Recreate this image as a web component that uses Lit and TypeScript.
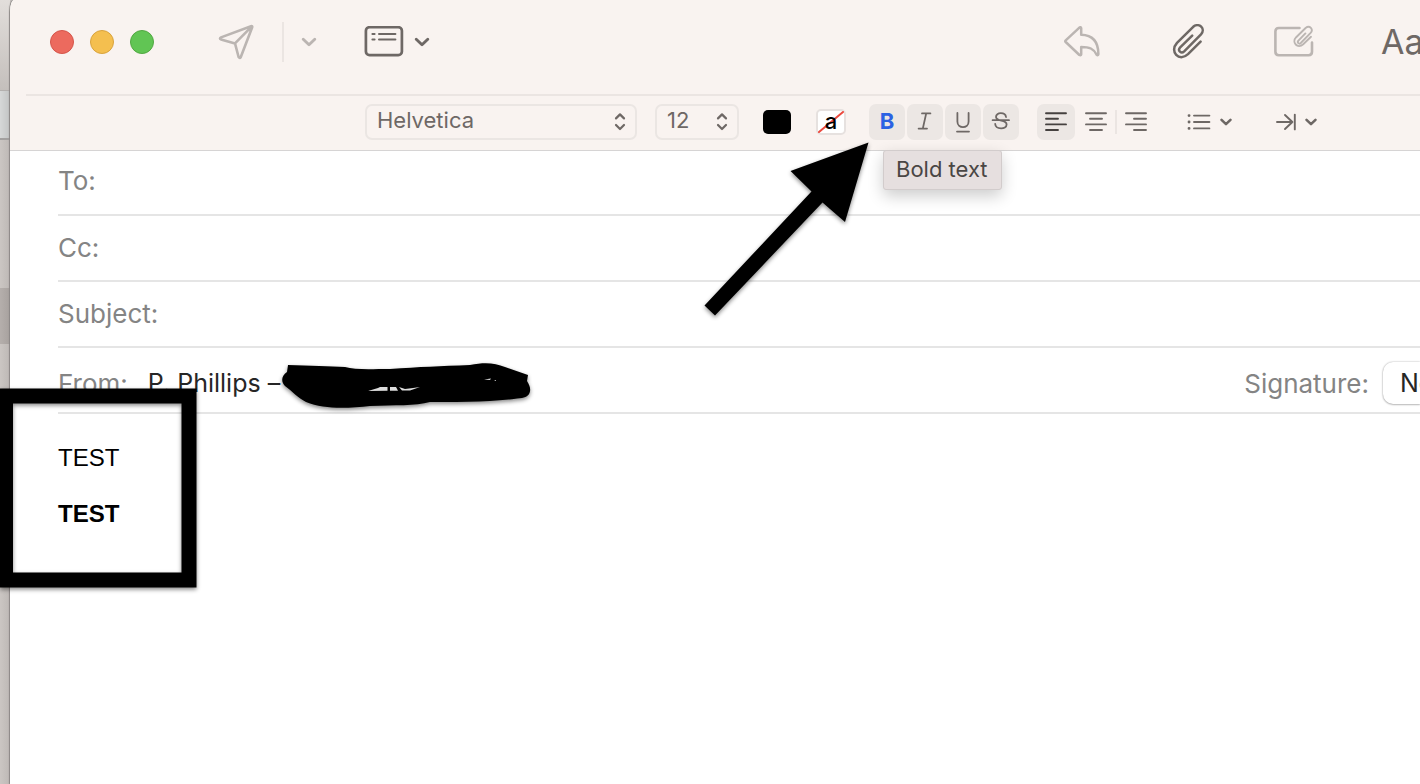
import { LitElement, html, css, svg } from "lit";
import { customElement, state } from "lit/decorators.js";

const chevron = (cls: string) => html`<svg class=${cls} viewBox="0 0 14 9" aria-hidden="true"><path d="M1.8 2 L7 7 L12.2 2" /></svg>`;
const updown = html`<svg class="updown" viewBox="0 0 12 20" aria-hidden="true"><path d="M2 6.4 L6 2.4 L10 6.4 M2 13 L6 17 L10 13" /></svg>`;

// Four text lines, each given as [start, end]
const lines = (rows: number[][]) => html`<svg class="lines" viewBox="0 0 22 20" aria-hidden="true">
  ${rows.map(([a, b], i) => svg`<path d="M${a} ${[1.2, 6.8, 12.4, 18][i]} H${b}" />`)}
</svg>`;

@customElement("app-root")
export class AppRoot extends LitElement {
  @state() private bold = true;

  static styles = css`
    :host {
      display: block;
      position: relative;
      overflow: hidden;
      height: 100vh;
      font-family: Inter, "Noto Sans", sans-serif;
      color: #262626;
    }
    * { box-sizing: border-box; }
    svg { display: block; fill: none; stroke: currentColor; stroke-linecap: round; stroke-linejoin: round; }
    button { border: 0; margin: 0; padding: 0; background: none; color: inherit; font: inherit; }
    input, select { border: 0; margin: 0; padding: 0; background: none; color: inherit; font: inherit; outline: none; appearance: none; }
    .screen { display: flex; height: 100%; background: #c6c1be; }
    .behind { flex: none; width: 10px; display: flex; flex-direction: column; background: linear-gradient(90deg, #cbc6c3, #bdb8b5); }
    .b1 { height: 90px; background: linear-gradient(#e2dedb, #c4bfbc); }
    .b2 { height: 50px; background: linear-gradient(90deg, #d6d8d8, #c2c4c4); border-top: 1px solid #b3b0ae; border-bottom: 2px solid #a2a09f; }
    .b3 { height: 148px; }
    .b4 { height: 56px; background: linear-gradient(90deg, #b5afac, #a7a19e); }
    .window { flex: 1; min-width: 0; display: flex; flex-direction: column; overflow: hidden; background: #fff; border-top-left-radius: 4px 12px; box-shadow: -1px 0 1px #8b8785; white-space: nowrap; }
    header { background: #f9f3f0; border-bottom: 1px solid #d6d4d4; color: #6e6865; }
    .toolbar { display: flex; align-items: center; height: 94px; padding: 0 0 10px 40px; }
    .light { width: 24px; height: 24px; border-radius: 50%; margin-right: 16px; border: 1px solid; }
    .red { background: #ec6a5e; border-color: #d5554a; }
    .yellow { background: #f4bf4f; border-color: #d9a33d; }
    .green { background: #61c554; border-color: #52a842; }
    .dim { color: #bbb5b2; }
    .send { margin-left: 48px; }
    .send svg { width: 36px; height: 36px; stroke-width: 2.6; }
    .vr { width: 2px; height: 40px; background: #ebe5e2; margin: 0 17px 0 28px; }
    .chev { width: 16px; height: 10px; stroke-width: 2.6; }
    .chev.small { width: 12px; height: 8px; stroke-width: 3; }
    .tmpl { display: flex; align-items: center; gap: 10px; margin-left: 47px; }
    .tmpl .card { width: 40px; height: 32px; }
    .grow { flex: 1; }
    .tools { display: flex; align-items: center; }
    .reply svg { width: 36px; height: 32px; stroke-width: 2.5; }
    .clip { margin-left: 72px; }
    .clip svg { width: 34px; height: 36px; stroke-width: 2.5; }
    .photo { margin-left: 68px; }
    .photo svg { width: 40px; height: 34px; stroke-width: 2.6; }
    .aa { width: 39px; margin-left: 67px; font-size: 34px; line-height: 40px; text-align: left; }
    .rule { height: 2px; margin-left: 16px; background: #ebe5e2; }
    .format { display: flex; align-items: center; height: 54px; padding: 0 0 2px 355px; }
    .pick { display: grid; align-items: center; height: 36px; border: 2px solid #ebe6e3; border-radius: 7px; font-size: 22px; }
    .pick > * { grid-area: 1 / 1; }
    .pick select { width: 100%; height: 32px; padding: 0 0 4px 10px; }
    .family { width: 272px; }
    .size { width: 84px; margin-left: 18px; }
    .updown { width: 12px; height: 20px; justify-self: end; margin-right: 9px; stroke-width: 2.2; pointer-events: none; }
    .ink { width: 28px; height: 24px; margin-left: 24px; border-radius: 5px; background: #000; }
    .paper { display: grid; width: 30px; height: 26px; margin-left: 25px; border: 2px solid #e6e1df; border-radius: 5px; background: #fff; color: #000; font-size: 22px; font-weight: 500; line-height: 20px; }
    .paper > * { grid-area: 1 / 1; }
    .paper svg { width: 26px; height: 22px; stroke: #ec4a3f; stroke-width: 2; }
    .styles { display: flex; gap: 2px; margin: 0 18px 0 23px; }
    .key { display: grid; place-items: center; width: 36px; height: 36px; border-radius: 7px; background: #ece7e4; font-size: 22px; line-height: 32px; }
    .key svg { width: 24px; height: 24px; stroke-width: 1.8; }
    .key.on { padding-bottom: 2px; color: #2c62e3; font-weight: 700; }
    .align { display: flex; align-items: center; }
    .al { display: grid; place-items: center; width: 38px; height: 36px; border-radius: 7px; }
    .al.on { margin-right: 2px; background: #ece7e4; color: #45413f; }
    .lines { width: 22px; height: 20px; stroke-width: 1.9; }
    .bar { width: 2px; height: 24px; background: #ebe5e2; }
    .drop { display: flex; align-items: center; gap: 9px; }
    .list { margin-left: 32px; }
    .list svg:first-child { width: 24px; height: 18px; stroke-width: 1.9; }
    .indent { margin-left: 44px; }
    .indent svg:first-child { width: 20px; height: 18px; stroke-width: 1.9; }
    .fields { padding-left: 48px; font-size: 25px; }
    .row { display: flex; align-items: center; height: 66px; border-bottom: 2px solid #e5e5e5; padding-bottom: 2px; }
    .row:first-child { height: 65px; padding-bottom: 4px; }
    .row:last-child { padding: 6px 0 0; }
    .row label { color: #848484; font-size: 26px; }
    .row input { flex: 1; min-width: 0; height: 40px; padding-left: 12px; }
    .from { margin-left: 20px; height: 40px; }
    .sig { width: 37px; height: 42px; margin-left: 14px; padding-left: 17px; border-radius: 10px 0 0 10px; background: #fff; box-shadow: 0 0 2px #0005, 0 1px 2px #0003; }
    .editor { flex: 1; padding: 30px 48px; color: #000; font-family: "Liberation Sans", Arial, sans-serif; font-size: 24px; line-height: 28px; outline: none; }
    .editor p { margin: 0 0 28px; }
    .anchor { position: relative; }
    .tip { position: absolute; left: 14px; top: 46px; z-index: 2; padding: 0 13px 2px 12px; color: #4a4644; background: #e6dfdf; border: 1px solid #d2cccc; border-radius: 3px; box-shadow: 0 6px 16px #0003; font-size: 22px; line-height: 36px; }
    .marks { position: absolute; left: 0; top: 0; width: 1420px; height: 784px; pointer-events: none; filter: drop-shadow(0 2px 2px #0007); stroke: none; fill: #000; }
    .marks .frame { fill: none; stroke: #000; stroke-width: 15; stroke-linejoin: miter; }
    .marks .gap { fill: #ddd; }
  `;

  render() {
    return html`
      <div class="screen">
        <div class="behind"><div class="b1"></div><div class="b2"></div><div class="b3"></div><div class="b4"></div></div>
        <main class="window">
          <header>
            <div class="toolbar">
              <button class="light red" aria-label="Close"></button>
              <button class="light yellow" aria-label="Minimize"></button>
              <button class="light green" aria-label="Zoom"></button>
              <button class="send dim" aria-label="Send">
                <svg viewBox="0 0 36 36"><path d="M33 2.2 Q34.6 1.6 34.2 3.2 L22.8 33 Q21.8 34.8 20.6 33 L17 19.4 L3 15.4 Q1 14.4 3 13.4 Z M33.6 2.6 L17 19.4" /></svg>
              </button>
              <span class="vr"></span>
              <button class="dim" aria-label="Send later">${chevron("chev")}</button>
              <button class="tmpl" aria-label="Header fields">
                <svg class="card" viewBox="0 0 40 32"><rect x="1.9" y="1.2" width="36" height="28" rx="3.6" stroke-width="2.7" /><path d="M8.4 8 h2.2 M15 8 H31.4 M8.4 13.4 h2.2 M15 13.4 H31.4" stroke-width="2" /></svg>
                ${chevron("chev")}
              </button>
              <span class="grow"></span>
              <div class="tools">
                <button class="reply dim" aria-label="Reply">
                  <svg viewBox="0 0 36 32"><path d="M17.2 2.2 V8.8 C28 9 34.2 15 34.4 28 Q34 30 32.6 28.6 C29.5 22.6 25.5 20.9 17.2 20.9 V28.2 Q16.9 29.8 15.4 29 L1.7 16 Q.9 15.2 1.7 14.4 L15.4 1.6 Q16.9 .6 17.2 2.2 Z" /></svg>
                </button>
                <button class="clip" aria-label="Attach">
                  <svg viewBox="0 0 34 36"><path d="M20.2 11.6 L8.2 23.4 C5.2 26.6 9.2 30.2 12.2 27.4 L29 10.4 C34.1 4.8 27 -2 21.2 2.8 L5 18.8 C-3 27.6 7.2 38.6 16 30.2 L28.6 17.6" /></svg>
                </button>
                <button class="photo dim" aria-label="Insert photo">
                  <svg viewBox="0 0 40 34"><path d="M25.5 3 H4.8 Q1.4 3 1.4 6.4 V26.8 Q1.4 30.2 4.8 30.2 H34.6 Q38 30.2 38 26.8 V17.5" /><path stroke-width="1.9" d="M31.4 8.4 L24.4 15.6 C22.8 17.6 25 19.6 26.8 18 L36.4 8.2 C40 4.2 35.6 -.2 31.6 3 L22.2 12.2 C17.2 17.4 23.6 24.2 29.2 19.2 L37 11.8" /></svg>
                </button>
                <button class="aa" aria-label="Format">Aa</button>
              </div>
            </div>
            <div class="rule"></div>
            <div class="format">
              <div class="pick family"><select aria-label="Font"><option>Helvetica</option></select>${updown}</div>
              <div class="pick size"><select aria-label="Font size"><option>12</option></select>${updown}</div>
              <button class="ink" aria-label="Text color"></button>
              <button class="paper" aria-label="Background color"><svg viewBox="0 0 26 22"><path d="M1 21 L25 1" /></svg><span>a</span></button>
              <div class="styles">
                <div class="anchor">
                  <button class="key ${this.bold ? "on" : ""}" aria-describedby="tip" @click=${() => (this.bold = !this.bold)}>B</button>
                  <div class="tip" id="tip" role="tooltip">Bold text</div>
                </div>
                <button class="key" aria-label="Italic"><svg viewBox="0 0 24 24"><path d="M9 3.4 H17.4 M5.6 18.6 H14 M13.2 3.4 L9.8 18.6" /></svg></button>
                <button class="key" aria-label="Underline"><svg viewBox="0 0 24 24"><path d="M6.4 3 V11.6 C6.4 19 17.6 19 17.6 11.6 V3 M6 21.6 H18" /></svg></button>
                <button class="key" aria-label="Strikethrough"><svg viewBox="0 0 24 24"><path d="M17 7 C16.4 1.8 6.8 2 7 7 C7.2 12 17.6 9.4 17.6 14.4 C17.6 19.8 6.6 19.8 6.2 14 M3.6 10.2 H20" /></svg></button>
              </div>
              <div class="align">
                <button class="al on" aria-label="Align left">${lines([[1, 21], [1, 13], [1, 21], [1, 13]])}</button>
                <button class="al" aria-label="Center">${lines([[1, 21], [5, 17], [1, 21], [5, 17]])}</button>
                <span class="bar"></span>
                <button class="al" aria-label="Align right">${lines([[1, 21], [9, 21], [1, 21], [9, 21]])}</button>
              </div>
              <button class="drop list" aria-label="List">
                <svg viewBox="0 0 24 18"><path d="M7 2.6 H22.4 M7 9 H22.4 M7 15.4 H22.4" /><path stroke-width="2.8" d="M2 2.6 h.1 M2 9 h.1 M2 15.4 h.1" /></svg>${chevron("chev small")}
              </button>
              <button class="drop indent" aria-label="Indent">
                <svg viewBox="0 0 20 18"><path d="M1 9 H16.4 M9 2 L16.4 9 L9 16 M18.8 1.6 V16.4" /></svg>${chevron("chev small")}
              </button>
            </div>
          </header>
          <section class="fields">
            <div class="row"><label for="to">To:</label><input id="to" /></div>
            <div class="row"><label for="cc">Cc:</label><input id="cc" /></div>
            <div class="row"><label for="subject">Subject:</label><input id="subject" /></div>
            <div class="row">
              <label for="from">From:</label>
              <select id="from" class="from"><option>P. Phillips –</option></select>
              <span class="grow"></span>
              <label for="sig">Signature:</label>
              <select id="sig" class="sig"><option>None</option></select>
            </div>
          </section>
          <div class="editor" contenteditable="true" role="textbox" aria-label="Message">
            <p>TEST</p><p><b>TEST</b></p>
          </div>
        </main>
      </div>
      <svg class="marks" viewBox="0 0 1420 784" aria-hidden="true">
        <path d="M868.500 142.500 L845 222 L822.500 202.500 L715 315.500 L704.500 305.500 L811.500 191.500 L790.500 171 Z" />
        <path class="frame" d="M5.500 396 H189 V580 H5.500 Z" />
        <path d="M288 365 C310 366 330 366 345 367 C355 370 370 369 390 369 C420 367 440 366 470 365 C485 362 495 363 505 367 L528 375 L527 381 C533 390 530 397 522 398 C500 401 470 402 430 402 C415 406 395 405 370 406 C350 408 325 410 306 402 C298 398 292 391 285 386 C281 382 281 376 287 372 Z" />
        <path class="gap" d="M368 391 L378 388 L380 387 H387.500 V390.800 Z M390 387 H396 L398 390.800 H390 Z M399 387 L405 389 L413 388 L420 387 L410 390.500 H402 Z M484 379.500 l7 -1 l-1 1.500 Z M494 380 l2 0 l0 1 Z" />
      </svg>
    `;
  }
}
